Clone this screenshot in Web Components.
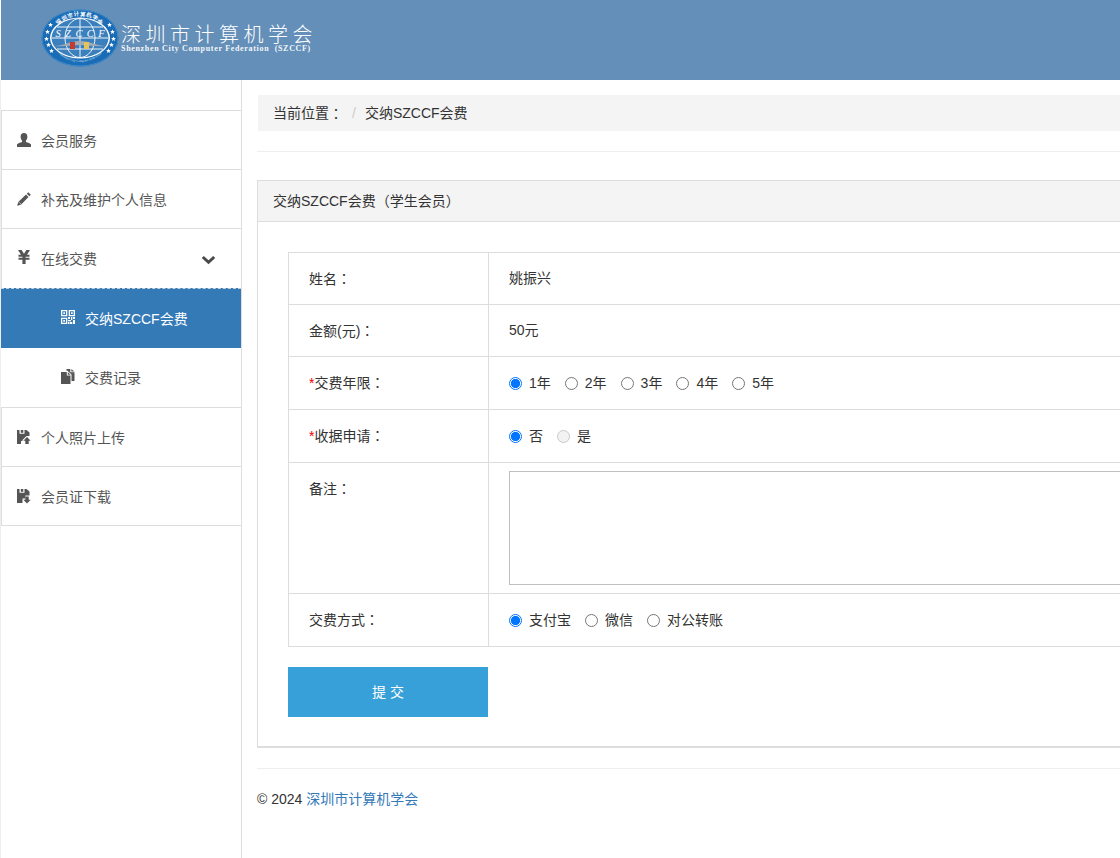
<!DOCTYPE html>
<html><head><meta charset="utf-8">
<style>
html,body{margin:0;padding:0;background:#fff;overflow:hidden;height:858px}
body{font:14px/20px "Liberation Sans","Noto Sans CJK SC",sans-serif;color:#333}
</style></head><body>
<app-shell>
  <site-header slot="header"></site-header>
  <side-nav slot="side">
    <nav-item icon="user">会员服务</nav-item>
    <nav-item icon="pencil">补充及维护个人信息</nav-item>
    <nav-item icon="yen" chevron>在线交费</nav-item>
    <nav-item icon="qr" sub active>交纳SZCCF会费</nav-item>
    <nav-item icon="copy" sub>交费记录</nav-item>
    <nav-item icon="up">个人照片上传</nav-item>
    <nav-item icon="down">会员证下载</nav-item>
  </side-nav>
  <fee-page></fee-page>
</app-shell>
<script>
const ICONS={
 user:'<path d="M7 0c2.200 0 3.400 1.700 3.400 3.800 0 1.500-.6 3-1.500 3.900v1.200c1.800.7 4.600 1.400 5.100 2.600V14H0v-2.500c.5-1.200 3.300-1.900 5.100-2.600V7.700C4.200 6.800 3.600 5.300 3.600 3.800 3.600 1.700 4.800 0 7 0z"/>',
 pencil:'<path d="M11.300.3l2.500 2.500-1.500 1.500-2.500-2.500zM9 2.600l2.500 2.500-7.300 7.300-3.600 1.300-.4-.4 1.300-3.600z"/><path d="M2.300 10.400l1.400 1.400" stroke="#fff" stroke-width=".8"/>',
 yen:'<path d="M1 0h3.600L7 3.800 9.400 0H13L10 4.800h2.500v1.900H8.600v1.100h3.900v1.900H8.600V14H5.400V9.700H1.500V7.800h3.900V6.700H1.500V4.800H4z"/>',
 qr:'<path fill-rule="evenodd" d="M0 0h6.300v6.300H0zM1.300 1.300v3.700h3.700V1.300zM2.300 2.300h1.700v1.700H2.300zM7.700 0h6.300v6.300H7.700zM9 1.300v3.700h3.700V1.300zM10 2.300h1.700v1.700H10zM0 7.700h6.300V14H0zM1.300 9v3.700h3.700V9zM2.300 10h1.700v1.700H2.300zM7 7h2v2H7zM10 7h1.300v3H10zM12 7h2v2h-2zM7 10h3v1.300H7zM12 10h2v4h-2zM7 12h1.500v2H7zM9 12h2.300v2H9z"/>',
 copy:'<path d="M0 3h5.800v3.600H9.500V15H0z"/><path d="M6.800 3v2.700H9.500z"/><path d="M5.500 0h3.800v3.300H13.500V12H10.500V5.500L6.500 1.700H5.500z"/><path d="M10.300.2l3.200 2.300h-3.200z"/>',
 up:'<path d="M0 0h2.500v3.800H7.500V0h2L12.500 2.500V6H9.500L5.500 10v1H4v3H0z"/><path d="M3.800 0h2.500v2.800H3.800z"/><path d="M10 7l3.700 3.700H11.700V14H8.300v-3.300H6.300z"/>',
 down:'<path d="M0 0h2.500v3.800H7.500V0h2L12.500 2.500V6.500H8.300V9.500H5.500V14H0z"/><path d="M3.800 0h2.500v2.800H3.800z"/><path d="M8.300 7.500h3.400v3.200h2L10 14.500l-3.700-3.800h2z"/>'
};
const mk=(html)=>{const t=document.createElement('template');t.innerHTML=html;return t};
const define=(name,html,init)=>{const t=mk(html);customElements.define(name,class extends HTMLElement{
  connectedCallback(){if(this.shadowRoot)return;const r=this.attachShadow({mode:'open'});r.appendChild(t.content.cloneNode(true));init&&init(this,r)}})};

define('app-shell',`<style>
:host{display:block;width:1120px;height:858px;overflow:hidden}
.body{display:grid;grid-template-columns:242px 1fr;height:778px}
.main{padding:15px 0 0 15px;overflow:hidden;min-width:0}
</style><slot name="header"></slot><div class="body"><slot name="side"></slot><div class="main"><slot></slot></div></div>`);

define('site-header',`<style>
:host{display:block;height:80px;margin-left:1px;background:#648fb9;position:relative}
.brand{display:flex;align-items:flex-start;gap:2px;padding:9px 0 0 40px}
svg{display:block;flex:none}
.cn{font:20px/22px "Liberation Serif","Noto Sans CJK SC",serif;font-weight:300;color:#fff;letter-spacing:4.500px;white-space:nowrap}
.en{font:bold 8px/9px "Liberation Serif",serif;color:#f2f6fa;letter-spacing:.68px;white-space:pre;margin-top:-2px}
.t{margin-top:15px}
text{font-family:"Liberation Serif",serif}
</style><div class="brand">
<svg width="78" height="58" viewBox="0 0 78 58">
<defs><path id="arcT" d="M13 31C13 15 25 7 39 7s26 8 26 24"/><path id="arcB" d="M11 34c4 12 16 19 28 19s24-7 28-19"/></defs>
<ellipse cx="39" cy="29" rx="38.500" ry="28.500" fill="#1a6cb6"/>
<ellipse cx="39" cy="29" rx="38" ry="28" fill="none" stroke="#3f8ccb" stroke-width="1"/>
<ellipse cx="39" cy="29" rx="30" ry="20.500" fill="#fff"/>
<ellipse cx="39" cy="29" rx="28.500" ry="19.500" fill="#3b80bd"/>
<g fill="none" stroke="#fff" stroke-width=".9"><ellipse cx="39" cy="29" rx="15" ry="19.500"/><path d="M39 9.500v39M11 29h56M16 18h46M16 40h46"/></g>
<g fill="#fff"><path id="st" d="M6.500 20.500l.7 1.600 1.700.1-1.300 1.100.4 1.700-1.500-.9-1.500.9.4-1.700-1.300-1.100 1.700-.1z"/><use href="#st" x="-1" y="7"/><use href="#st" x="1" y="13"/><use href="#st" x="4" y="19"/><use href="#st" x="3" y="-7"/><use href="#st" x="65" y="0"/><use href="#st" x="66" y="7"/><use href="#st" x="64" y="13"/><use href="#st" x="61" y="19"/><use href="#st" x="62" y="-7"/></g>
<text font-size="5.500" font-weight="bold" fill="#fff" text-anchor="middle"><textPath href="#arcT" startOffset="50%">深圳市计算机学会</textPath></text>
<text font-size="3.200" fill="#cfe2f2" text-anchor="middle"><textPath href="#arcB" startOffset="50%">Shenzhen City Computer Federation</textPath></text>
<text x="39.500" y="28" font-size="10.500" font-style="italic" fill="#fff" text-anchor="middle" letter-spacing=".9">S Z C C F</text>
<path d="M13 37c9 0 17-5 26-5s17 5 26 5c-9 1-17-1-26-1S22 38 13 37z" fill="#a3acb5"/>
<rect x="29" y="33" width="5" height="7" fill="#c23a30"/><rect x="43" y="33" width="5" height="7" fill="#e6c25a"/>
</svg>
<div class="t"><div class="cn">深圳市计算机学会</div><div class="en">Shenzhen City Computer Federation  (SZCCF)</div></div>
</div>`);

define('side-nav',`<style>
:host{display:block;border-right:1px solid #ddd;border-left:1px solid #eee;padding-top:30px;height:748px;box-sizing:content-box}
.list{border-bottom:1px solid #ddd}
</style><div class="list"><slot></slot></div>`);

define('nav-item',`<style>
:host{display:block;height:59px;box-sizing:border-box;border-left:1px solid #ddd;border-top:1px solid #ddd;color:#555;font-size:14px;line-height:20px}
:host([chevron]){height:60px}
:host([sub]){border-top:0;border-left:0;height:59px}
:host([active]){background:#337ab7;color:#fff;border-top:1px dashed #c8d2dc;height:60px}
.row{display:flex;align-items:center;height:100%;box-sizing:border-box;padding-left:15px;padding-top:2px;position:relative}
:host([chevron]) .row,:host([sub]) .row{padding-top:0}
:host([sub]) .row{padding-left:60px}
svg.i{width:14px;height:14px;fill:#555;flex:none;margin-right:10px;margin-top:-3px;overflow:visible}
:host([active]) svg.i{fill:#fff}
svg.c{position:absolute;left:199px;top:25px;width:15px;height:11px}
</style><div class="row"><svg class="i" viewBox="0 0 14 14"></svg><span><slot></slot></span></div>`,(h,r)=>{
  r.querySelector('svg.i').innerHTML=ICONS[h.getAttribute('icon')];
  if(h.hasAttribute('chevron')){const d=r.querySelector('.row');d.insertAdjacentHTML('beforeend','<svg class="c" viewBox="0 0 15 11"><path d="M1.800 3L7.500 8.300 13.200 3" fill="none" stroke="#4a4a4a" stroke-width="3"/></svg>')}
});

define('radio-opt',`<style>
:host{display:inline-flex;align-items:center;font-size:14px;color:#333;margin-right:14px}
.r{width:13px;height:13px;box-sizing:border-box;border:1px solid #767676;border-radius:50%;margin-right:7px;background:#fff;flex:none}
:host([checked]) .r{border:1px solid #0075ff;background:radial-gradient(circle,#0075ff 0 4.300px,#fff 4.900px)}
:host([disabled]) .r{border-color:#c9c9c9;background:#f2f2f2}
</style><span class="r"></span><slot></slot>`);

define('form-row',`<style>
:host{display:grid;grid-template-columns:200px 1fr;border-bottom:1px solid #ddd;font-size:14px;color:#333;box-sizing:border-box}
.l{padding:15px 0 0 20px;box-sizing:border-box;border-right:1px solid #ddd;line-height:20px}
.v{padding:0 0 0 20px;display:flex;align-items:center}
:host([plain]) .v{padding-bottom:2px}
</style><div class="l"><slot name="label"></slot></div><div class="v"><slot></slot></div>`);

define('fee-page',`<style>
:host{display:block;width:900px}
.crumb{background:#f4f4f4;height:36px;padding-left:15px;display:flex;align-items:center;line-height:20px;width:900px;margin-left:1px;color:#333;font-size:14px;white-space:pre}
.sep{color:#ccc;margin:0 9px 0 9px}
.hr{border-top:1px solid #eee;margin:20px 0 28px}
.panel{border:1px solid #ddd;border-bottom-width:2px;border-right:0;height:568px;box-sizing:border-box}
.ph{height:40px;background:#f4f4f4;border-bottom:1px solid #ddd;padding-left:15px;font-size:14px;line-height:39px}
.pb{padding:30px 0 0 30px}
.tbl{border:1px solid #ddd;border-bottom:0;border-right:0}
.btn{display:block;width:200px;height:50px;margin:20px 0 0 0;background:#38a0d8;color:#fff;border:0;font:14px "Liberation Sans","Noto Sans CJK SC",sans-serif;padding:0 0 2px}
.red{color:#e00}
.p{font-family:"Noto Sans CJK TC",sans-serif}
.q{display:inline-block;width:14px;text-align:center;font-family:"Noto Sans CJK TC",sans-serif}
textarea{display:block;box-sizing:border-box;width:700px;height:114px;border:1px solid #c0c0c0;margin:0;padding:0;background:#fff;resize:none}
.foot{border-top:1px solid #eee;margin-top:20px;padding-top:20px;font-size:14px;line-height:20px;color:#333;height:21px}
a{color:#337ab7;text-decoration:none}
</style>
<div class="crumb">当前位置<span class="p">：</span> <span class="sep">/</span>交纳SZCCF会费</div>
<div class="hr"></div>
<div class="panel"><div class="ph">交纳SZCCF会费<span class="q">（</span>学生会员<span class="q">）</span></div>
<div class="pb"><div class="tbl">
<form-row plain style="height:52px"><span slot="label">姓名<span class="p">：</span></span><span>姚振兴</span></form-row>
<form-row plain style="height:52px"><span slot="label">金额(元)<span class="p">：</span></span><span>50元</span></form-row>
<form-row style="height:53px"><span slot="label"><span class="red">*</span>交费年限<span class="p">：</span></span><radio-opt checked>1年</radio-opt><radio-opt>2年</radio-opt><radio-opt>3年</radio-opt><radio-opt>4年</radio-opt><radio-opt>5年</radio-opt></form-row>
<form-row style="height:53px"><span slot="label"><span class="red">*</span>收据申请<span class="p">：</span></span><radio-opt checked>否</radio-opt><radio-opt disabled>是</radio-opt></form-row>
<form-row style="height:131px"><span slot="label">备注<span class="p">：</span></span><textarea></textarea></form-row>
<form-row style="height:53px"><span slot="label">交费方式<span class="p">：</span></span><radio-opt checked>支付宝</radio-opt><radio-opt>微信</radio-opt><radio-opt>对公转账</radio-opt></form-row>
</div>
<button class="btn">提 交</button></div></div>
<div class="foot">© 2024 <a>深圳市计算机学会</a></div>`);
</script></body></html>
